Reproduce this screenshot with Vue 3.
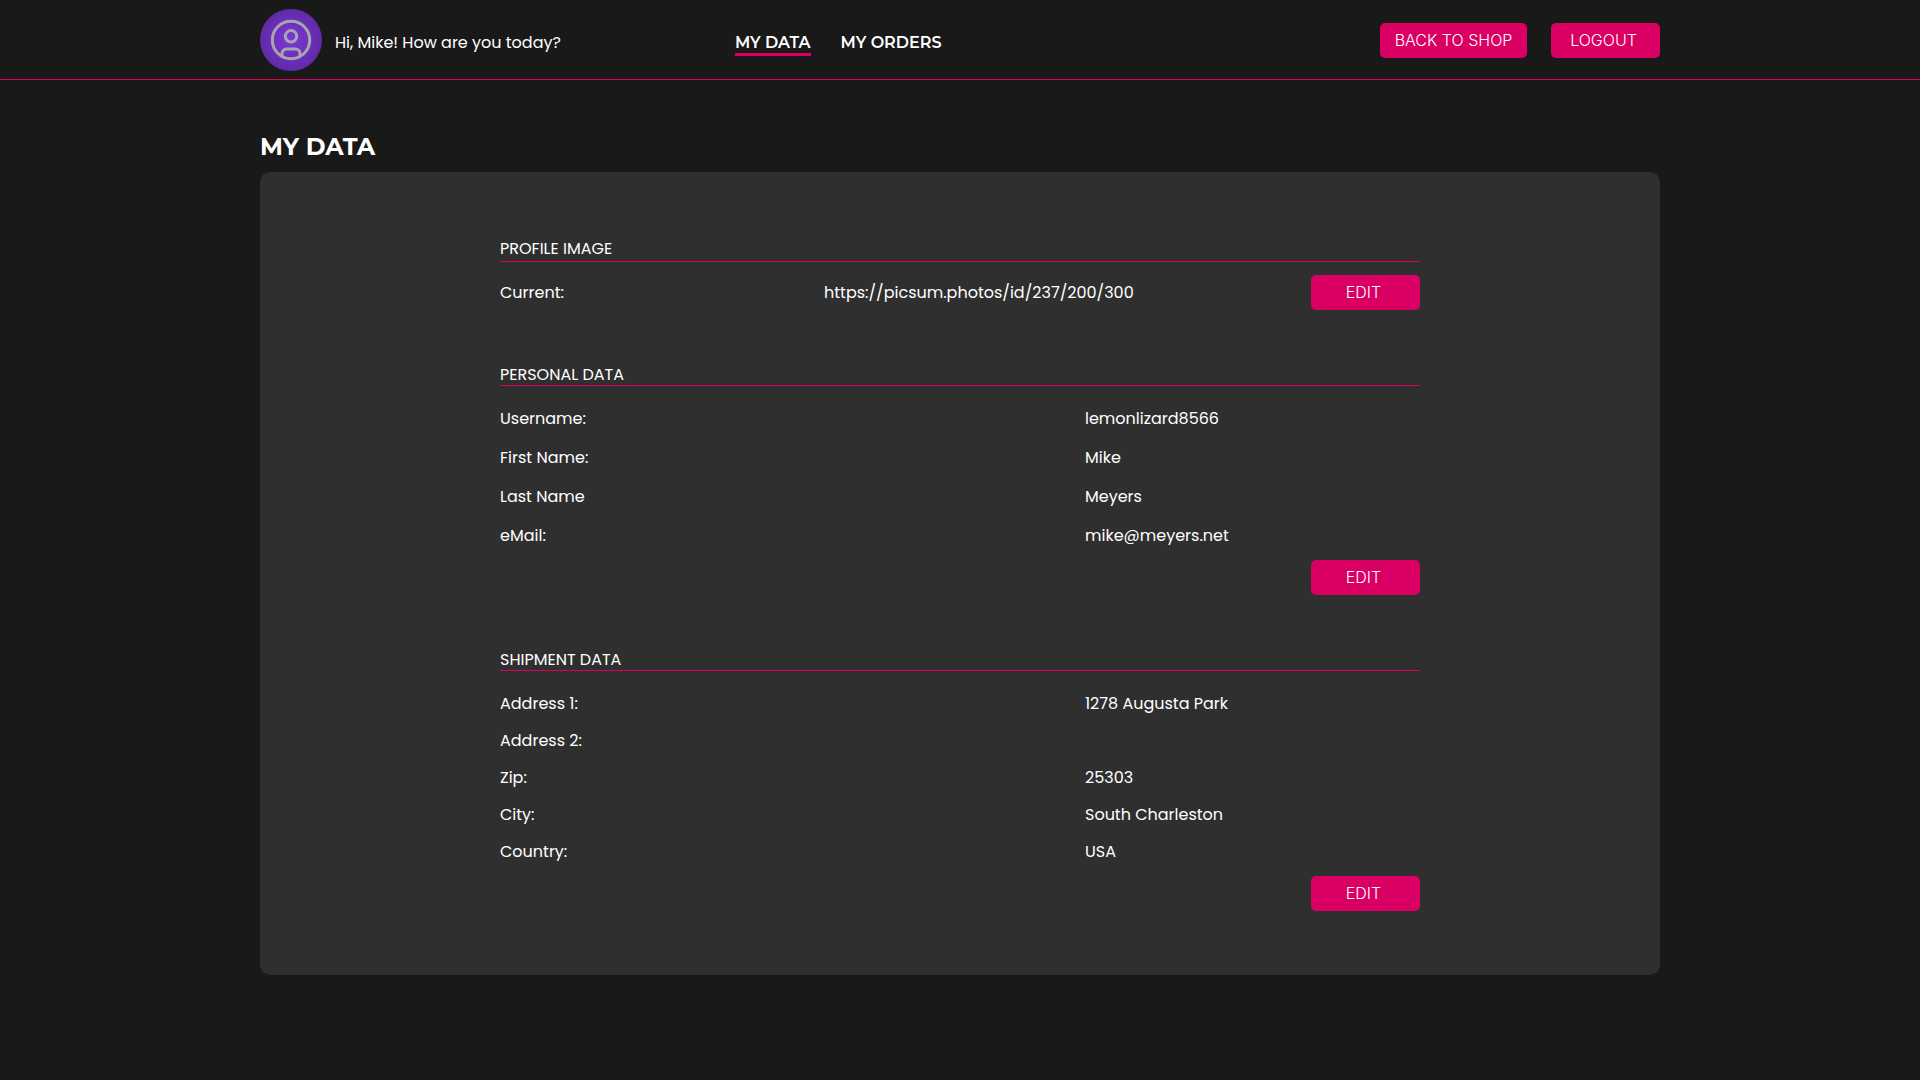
<script setup>
const sections = [
  {
    id: 'personal',
    title: 'PERSONAL DATA',
    rows: [
      ['Username:', 'lemonlizard8566'],
      ['First Name:', 'Mike'],
      ['Last Name', 'Meyers'],
      ['eMail:', 'mike@meyers.net'],
    ],
  },
  {
    id: 'shipment',
    title: 'SHIPMENT DATA',
    rows: [
      ['Address 1:', '1278 Augusta Park'],
      ['Address 2:', ''],
      ['Zip:', '25303'],
      ['City:', 'South Charleston'],
      ['Country:', 'USA'],
    ],
  },
]
</script>

<template>
  <header class="topbar">
    <div class="container topbar-inner">
      <div class="user">
        <svg class="avatar" viewBox="0 0 62 62" aria-hidden="true">
          <defs>
            <radialGradient id="avatar-fill">
              <stop offset="0" stop-color="#7c38d8" />
              <stop offset="1" stop-color="#602aa8" />
            </radialGradient>
          </defs>
          <circle cx="31" cy="31" r="31" fill="url(#avatar-fill)" />
          <g fill="none" stroke="#a9a5ad" stroke-width="3">
            <circle cx="31" cy="31" r="18.7" />
            <circle cx="31" cy="27.3" r="5.7" />
            <path d="M22 47v-2.500a4.500 4.500 0 0 1 4.500-4.500h9a4.500 4.500 0 0 1 4.500 4.500v2.500" />
          </g>
        </svg>
        <span class="greeting">Hi, Mike! How are you today?</span>
      </div>
      <nav class="nav">
        <a href="#my-data" class="nav-link active" aria-current="page">MY DATA</a>
        <a href="#my-orders" class="nav-link">MY ORDERS</a>
      </nav>
      <div class="actions">
        <button type="button" class="btn btn-wide">BACK TO SHOP</button>
        <button type="button" class="btn">LOGOUT</button>
      </div>
    </div>
  </header>

  <main id="my-data" class="container page">
    <h1 class="page-title">MY DATA</h1>
    <div class="card">
      <div class="card-content">
        <section class="section">
          <h2 class="section-title section-title-tall">PROFILE IMAGE</h2>
          <div class="image-row">
            <span>Current:</span>
            <span>https://picsum.photos/id/237/200/300</span>
            <button type="button" class="btn">EDIT</button>
          </div>
        </section>
        <section v-for="s in sections" :key="s.id" class="section">
          <h2 class="section-title">{{ s.title }}</h2>
          <dl class="details" :class="s.id">
            <div v-for="[label, value] in s.rows" :key="label" class="detail">
              <dt>{{ label }}</dt>
              <dd>{{ value }}</dd>
            </div>
          </dl>
          <button type="button" class="btn section-edit">EDIT</button>
        </section>
      </div>
    </div>
  </main>
</template>

<style>
body {
  background: #191919;
}
</style>

<style scoped>
.topbar,
.page {
  color: #fff;
  font: 400 16px/24px Poppins, Inter, sans-serif;
}

.container {
  box-sizing: border-box;
  width: 100%;
  max-width: 1440px;
  margin: 0 auto;
  padding: 0 20px;
}

.topbar {
  border-bottom: 1px solid #da0063;
}

.topbar-inner {
  display: flex;
  align-items: center;
  min-height: 79px;
}

.user {
  display: flex;
  align-items: center;
  gap: 13px;
  flex: 0 0 475px;
}

.avatar {
  width: 62px;
  height: 62px;
  flex: none;
}

.greeting {
  padding-top: 6px;
}

.nav {
  display: flex;
  gap: 30px;
  padding-top: 8px;
}

.nav-link {
  padding-top: 2px;
  border-bottom: 3px solid transparent;
  color: #fff;
  font: 600 16px/20px Montserrat, Inter, sans-serif;
  text-decoration: none;
}

.nav-link.active {
  border-color: #da0063;
}

.actions {
  display: flex;
  gap: 24px;
  margin-left: auto;
  padding-top: 2px;
}

.btn {
  box-sizing: border-box;
  width: 109px;
  height: 35px;
  padding: 0 4px 2px 0;
  border: 0;
  border-radius: 5px;
  background: #da0063;
  color: #fff;
  font: 300 16px/24px Inter, sans-serif;
  cursor: pointer;
}

.btn-wide {
  width: 147px;
  padding-right: 0;
}

.page {
  padding-top: 54px;
  padding-bottom: 105px;
}

.page-title {
  margin: 0 0 12px;
  font: 700 24px/26px Montserrat, Inter, sans-serif;
}

.card {
  padding: 65px 20px 64px;
  border-radius: 10px;
  background: #2f2f2f;
}

.card-content {
  display: flex;
  flex-direction: column;
  gap: 53px;
  max-width: 920px;
  margin: 0 auto;
}

.section {
  display: flex;
  flex-direction: column;
}

.section-title {
  margin: 0;
  padding-top: 2px;
  border-bottom: 1px solid #da0063;
  font-size: 16px;
  font-weight: 400;
  line-height: 20px;
}

.section-title-tall {
  padding-bottom: 2px;
}

.image-row {
  display: grid;
  grid-template-columns: 324fr 487fr 109px;
  align-items: center;
  margin-top: 13px;
}

.details {
  display: flex;
  flex-direction: column;
  margin: 21px 0 12px;
}

.personal {
  gap: 15px;
}

.shipment {
  gap: 13px;
}

.detail {
  display: grid;
  grid-template-columns: 585fr 335fr;
}

.detail dd {
  margin: 0;
}

.section-edit {
  align-self: flex-end;
}
</style>
